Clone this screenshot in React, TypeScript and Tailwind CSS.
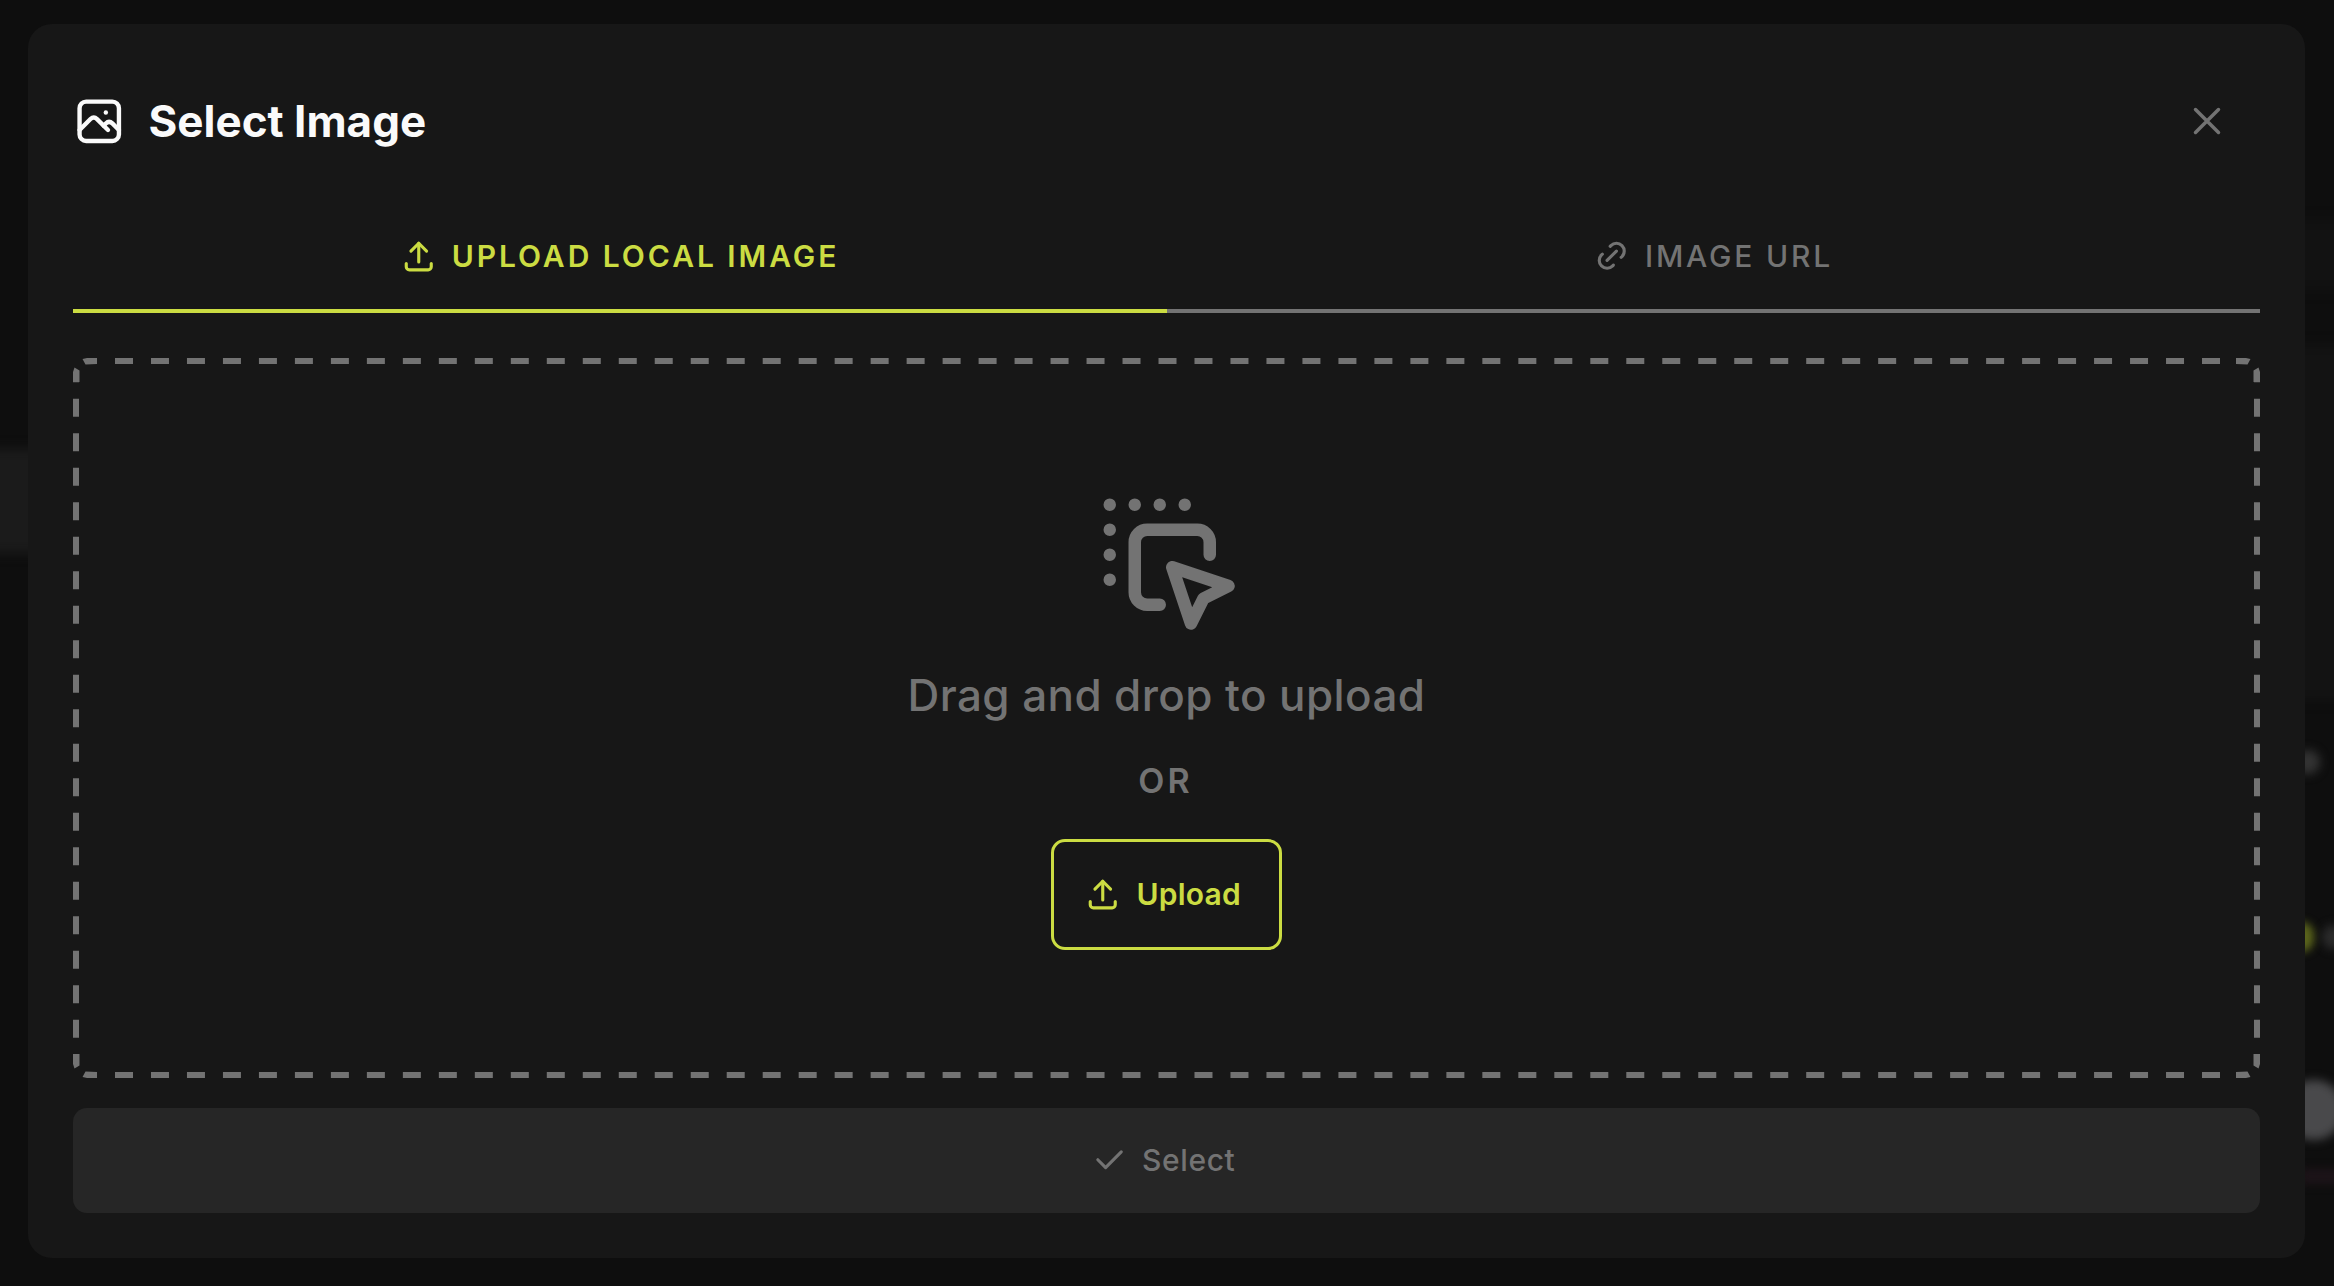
import type { ReactNode } from 'react';

const UploadIcon = () => (
  <svg viewBox="0 0 24 24" fill="none" stroke="currentColor" strokeWidth="2" strokeLinecap="round" strokeLinejoin="round" className="size-[37.5px] shrink-0">
    <path d="M4 17v2a2 2 0 0 0 2 2h12a2 2 0 0 0 2-2v-2" />
    <path d="M7 9l5-5l5 5" />
    <path d="M12 4v12" />
  </svg>
);

const ImageIcon = () => (
  <svg viewBox="0 0 24 24" fill="none" stroke="currentColor" strokeWidth="2" strokeLinecap="round" strokeLinejoin="round" className="size-[52.5px] shrink-0">
    <path d="M15 8h.01" />
    <path d="M3 6a3 3 0 0 1 3-3h12a3 3 0 0 1 3 3v12a3 3 0 0 1-3 3H6a3 3 0 0 1-3-3z" />
    <path d="M3 16l5-5c.928-.893 2.072-.893 3 0l5 5" />
    <path d="M14 14l1-1c.928-.893 2.072-.893 3 0l3 3" />
  </svg>
);

const LinkIcon = () => (
  <svg viewBox="0 0 24 24" fill="none" stroke="currentColor" strokeWidth="2" strokeLinecap="round" strokeLinejoin="round" className="size-[37.5px] shrink-0">
    <path d="M9 15l6-6" />
    <path d="M11 6l.463-.536a5 5 0 0 1 7.071 7.072l-.534.464" />
    <path d="M13 18l-.397.534a5.068 5.068 0 0 1-7.127 0a4.972 4.972 0 0 1 0-7.071l.524-.463" />
  </svg>
);

const CheckIcon = () => (
  <svg viewBox="0 0 24 24" fill="none" stroke="currentColor" strokeWidth="2" strokeLinecap="round" strokeLinejoin="round" className="size-[37.5px] shrink-0">
    <path d="M5 12l5 5l10-10" />
  </svg>
);

const DragDropIcon = () => (
  <svg width="150" height="150" viewBox="0 0 24 24" fill="none" stroke="currentColor" strokeWidth="2" strokeLinecap="round" strokeLinejoin="round" className="mr-[2px]">
    <path d="M19 11v-2a2 2 0 0 0-2-2h-8a2 2 0 0 0-2 2v8a2 2 0 0 0 2 2h2" />
    <path d="M13 13l9 3l-4 2l-2 4l-3-9" />
    <path d="M3 3v.01M7 3v.01M11 3v.01M15 3v.01M3 7v.01M3 11v.01M3 15v.01" />
  </svg>
);

function Tab({ active, children }: { active?: boolean; children: ReactNode }) {
  return (
    <button
      className={
        active
          ? 'flex h-[93px] flex-1 items-start justify-center border-b-4 border-[#cbdc42] pt-4 text-[#cbdc42]'
          : 'flex h-[93px] flex-1 items-start justify-center border-b-4 border-[#737373] pt-4 text-[#737373]'
      }
    >
      {children}
    </button>
  );
}

export default function App() {
  return (
    <div className="relative h-[1286px] w-[2334px] overflow-hidden bg-[#0e0e0e] px-[28px] pt-[24px] font-['Inter',sans-serif]">
      <div className="absolute -left-8 top-[449px] h-[104px] w-[76px] rounded-lg bg-[#1b1b1b] blur-[6px]" />
      <div className="absolute left-[2290px] top-[220px] h-[70px] w-20 bg-[#121212] blur-[6px]" />
      <div className="absolute left-[2290px] top-[345px] h-[355px] w-20 bg-[#131313] blur-[6px]" />
      <div className="absolute left-[2296px] top-[750px] h-[24px] w-[24px] rounded-full bg-[#333333] blur-[5px]" />
      <div className="absolute left-[2288px] top-[922px] h-[30px] w-[26px] rounded-full bg-[#5c661c] blur-[4px]" />
      <div className="absolute left-[2322px] top-[925px] h-[24px] w-[24px] rounded-full bg-[#2b2b2b] blur-[5px]" />
      <div className="absolute left-[2284px] top-[1080px] h-[60px] w-[60px] rounded-full bg-[#49494b] blur-[5px]" />
      <div className="absolute left-[2300px] top-[1169px] h-[15px] w-[60px] bg-[#1d1419] blur-[5px]" />

      <main className="relative flex h-[1233.5px] w-[2277px] flex-col rounded-[24px] bg-[#171717] px-[45px]">
        <header className="flex h-[194px] items-center justify-between pr-[37px]">
          <div className="flex items-center gap-[23px] text-[#fafafa]">
            <ImageIcon />
            <h1 className="text-[44px] leading-[56px] font-bold">Select Image</h1>
          </div>
          <button aria-label="Close" className="text-[#737373]">
            <svg width="32" height="32" viewBox="0 0 32 32" stroke="currentColor" strokeWidth="3.5" strokeLinecap="round">
              <path d="M4.500 4.500L27.500 27.500M27.500 4.500L4.500 27.500" />
            </svg>
          </button>
        </header>

        <nav className="mt-[2px] flex">
          <Tab active>
            <span className="flex items-center gap-[14px]">
              <UploadIcon />
              <span className="text-[30px] leading-[40px] font-semibold tracking-[2.95px]">UPLOAD LOCAL IMAGE</span>
            </span>
          </Tab>
          <Tab>
            <span className="flex items-center gap-[14px]">
              <LinkIcon />
              <span className="text-[30px] leading-[40px] font-[450] tracking-[2.8px]">IMAGE URL</span>
            </span>
          </Tab>
        </nav>

        <section className="relative mt-[45px] flex h-[720px] flex-col items-center pt-[128px] text-[#737373]">
          <svg className="absolute inset-0" width="2187" height="720" fill="none" stroke="#737373" strokeWidth="6">
            <path d="M24 3H2163" strokeDasharray="18 17.983" strokeDashoffset="-18" />
            <path d="M24 717H2163" strokeDasharray="18 17.983" strokeDashoffset="-18" />
            <path d="M3 24V696" strokeDasharray="18 16.500" strokeDashoffset="-16.700" />
            <path d="M2184 24V696" strokeDasharray="18 16.500" strokeDashoffset="-16.700" />
            <g fill="#737373" stroke="none">
              <path d="M24 0H14L9.500 1L12.500 6.500L24 6ZM0 24V14L1.500 9.500L6.500 12.500V24Z" />
              <path d="M2163 0h10l4.500 1l-3 5.500l-11.500-.500ZM2187 24V14l-1.500-4.500l-5 3V24Z" />
              <path d="M24 720H14L9.500 719L12.500 713.500L24 714ZM0 696V706L1.500 710.500L6.500 707.500V696Z" />
              <path d="M2163 720h10l4.500-1l-3-5.500l-11.500.500ZM2187 696V706l-1.500 4.500l-5-3V696Z" />
            </g>
          </svg>
          <DragDropIcon />
          <p className="mt-[29px] text-[44px] leading-[60px] font-medium tracking-[0.4px]">Drag and drop to upload</p>
          <p className="mt-[34px] pr-[2px] text-[34px] leading-[44px] font-semibold tracking-[3px]">OR</p>
          <button className="mt-[36px] flex h-[111px] w-[231px] items-center justify-center gap-[15px] rounded-[14px] border-3 border-[#cbdc42] pr-[8px] pb-[2px] text-[#cbdc42]">
            <UploadIcon />
            <span className="text-[30px] leading-[40px] font-semibold tracking-[0.2px]">Upload</span>
          </button>
        </section>

        <button className="mt-[30px] flex h-[105px] items-center justify-center gap-[15px] rounded-[14px] bg-[#262626] pr-[8px] pb-px text-[#737373]">
          <CheckIcon />
          <span className="text-[30px] leading-[40px] font-medium tracking-[0.6px]">Select</span>
        </button>
      </main>
    </div>
  );
}
